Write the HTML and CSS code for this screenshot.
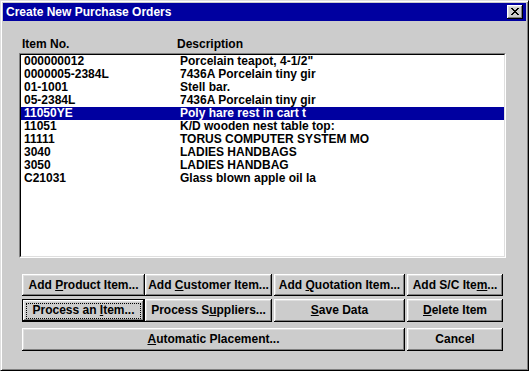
FILE: index.html
```html
<!DOCTYPE html>
<html>
<head>
<meta charset="utf-8">
<title>Create New Purchase Orders</title>
<link rel="stylesheet" href="styles.css">
</head>
<body>
<div class="window">
  <div class="titlebar">
    <span class="title">Create New Purchase Orders</span>
    <span class="close">
      <svg width="16" height="14" viewBox="0 0 16 14" shape-rendering="crispEdges">
        <g fill="#000">
          <rect x="4" y="3" width="2" height="1"/><rect x="10" y="3" width="2" height="1"/>
          <rect x="5" y="4" width="2" height="1"/><rect x="9" y="4" width="2" height="1"/>
          <rect x="6" y="5" width="4" height="1"/>
          <rect x="7" y="6" width="2" height="1"/>
          <rect x="6" y="7" width="4" height="1"/>
          <rect x="5" y="8" width="2" height="1"/><rect x="9" y="8" width="2" height="1"/>
          <rect x="4" y="9" width="2" height="1"/><rect x="10" y="9" width="2" height="1"/>
        </g>
      </svg>
    </span>
  </div>
  <div class="content">
    <div class="headers">
      <span class="col-item">Item No.</span><span class="col-desc">Description</span>
    </div>
    <div class="listbox">
      <div class="listbox-inner">
        <div class="row"><span class="col-item">000000012</span><span class="col-desc">Porcelain teapot, 4-1/2"</span></div>
        <div class="row"><span class="col-item">0000005-2384L</span><span class="col-desc">7436A Porcelain tiny gir</span></div>
        <div class="row"><span class="col-item">01-1001</span><span class="col-desc">Stell bar.</span></div>
        <div class="row"><span class="col-item">05-2384L</span><span class="col-desc">7436A Porcelain tiny gir</span></div>
        <div class="row current"><span class="col-item">11050YE</span><span class="col-desc">Poly hare rest in cart t</span></div>
        <div class="row"><span class="col-item">11051</span><span class="col-desc">K/D wooden nest table top:</span></div>
        <div class="row"><span class="col-item">11111</span><span class="col-desc">TORUS COMPUTER SYSTEM MO</span></div>
        <div class="row"><span class="col-item">3040</span><span class="col-desc">LADIES HANDBAGS</span></div>
        <div class="row"><span class="col-item">3050</span><span class="col-desc">LADIES HANDBAG</span></div>
        <div class="row"><span class="col-item">C21031</span><span class="col-desc">Glass blown apple oil la</span></div>
      </div>
    </div>
    <div class="buttons">
      <div class="btn-row row-1">
        <button class="btn w-a">Add <u>P</u>roduct Item...</button>
        <button class="btn w-b">Add <u>C</u>ustomer Item...</button>
        <button class="btn w-c">Add <u>Q</u>uotation Item...</button>
        <button class="btn w-d">Add S/C Ite<u>m</u>...</button>
      </div>
      <div class="btn-row row-2">
        <button class="btn w-a default">Process an <u>I</u>tem...</button>
        <button class="btn w-b">Process S<u>u</u>ppliers...</button>
        <button class="btn w-c"><u>S</u>ave Data</button>
        <button class="btn w-d"><u>D</u>elete Item</button>
      </div>
      <div class="btn-row row-3">
        <button class="btn w-wide"><u>A</u>utomatic Placement...</button>
        <button class="btn w-d">Cancel</button>
      </div>
    </div>
  </div>
</div>
</body>
</html>
```

FILE: styles.css
```css
* {
  box-sizing: border-box;
}

body {
  margin: 0;
  background: #cccccc;
  color: #000;
  font: bold 12px/13px "Liberation Sans", Arial, sans-serif;
}

.window {
  width: 529px;
  height: 371px;
  background: #cccccc;
  border: 1px solid;
  border-color: #dfdfdf #000 #000 #dfdfdf;
  box-shadow: inset 1px 1px #fff, inset -1px -1px #808080;
  padding: 2px;
  display: flex;
  flex-direction: column;
}

.titlebar {
  height: 18px;
  flex: none;
  background: #0000a0;
  color: #fff;
  display: flex;
  align-items: center;
  justify-content: space-between;
  padding: 0 3px;
}

.title {
  white-space: nowrap;
}

.close {
  width: 16px;
  height: 14px;
  background: #cccccc;
  box-shadow: inset -1px -1px #000, inset 1px 1px #fff, inset -2px -2px #808080, inset 2px 2px #dfdfdf;
  display: block;
}

.close svg {
  display: block;
}

.content {
  padding: 17px 0 0 16px;
}

.headers {
  height: 13px;
  padding-left: 3px;
  white-space: nowrap;
}

.headers .col-item {
  display: inline-block;
  width: 155px;
}

.listbox {
  margin-top: 2px;
  width: 487px;
  height: 205px;
  border: 1px solid;
  border-color: #808080 #fff #fff #808080;
}

.listbox-inner {
  height: 100%;
  background: #fff;
  border: 1px solid;
  border-color: #000 #dfdfdf #dfdfdf #000;
}

.row {
  height: 13px;
  padding-left: 3px;
  white-space: nowrap;
}

.row .col-item {
  display: inline-block;
  width: 156px;
}

.row.current {
  background: #0000a0;
  color: #fff;
}

.buttons {
  margin-top: 16px;
  padding-left: 3px;
}

.btn-row {
  display: flex;
}

.row-1 {
  height: 22px;
}

.row-2 {
  height: 23px;
  margin-top: 3px;
}

.row-3 {
  height: 23px;
  margin-top: 6px;
}

.btn {
  appearance: none;
  -webkit-appearance: none;
  position: relative;
  flex: none;
  height: 100%;
  margin: 0;
  padding: 0;
  border: 0;
  background: #cccccc;
  color: #000;
  font: inherit;
  text-align: center;
  white-space: nowrap;
  box-shadow: inset -1px -1px #000, inset 1px 1px #fff, inset -2px -2px #808080, inset 2px 2px #dfdfdf;
}

.btn u {
  text-decoration: underline;
  text-underline-offset: 1px;
}

.btn.default {
  box-shadow: inset 0 0 0 1px #000, inset -2px -2px #000, inset 2px 2px #fff, inset -3px -3px #808080, inset 3px 3px #dfdfdf;
}

.btn.default::after {
  content: "";
  position: absolute;
  top: 4px;
  left: 4px;
  right: 4px;
  bottom: 3px;
  border: 1px dotted #000;
}

.w-a {
  width: 123px;
}

.w-b {
  width: 127px;
}

.w-c {
  width: 131px;
  margin-left: 2px;
}

.w-d {
  width: 96px;
  margin-left: 2px;
}

.w-wide {
  width: 383px;
}
```
